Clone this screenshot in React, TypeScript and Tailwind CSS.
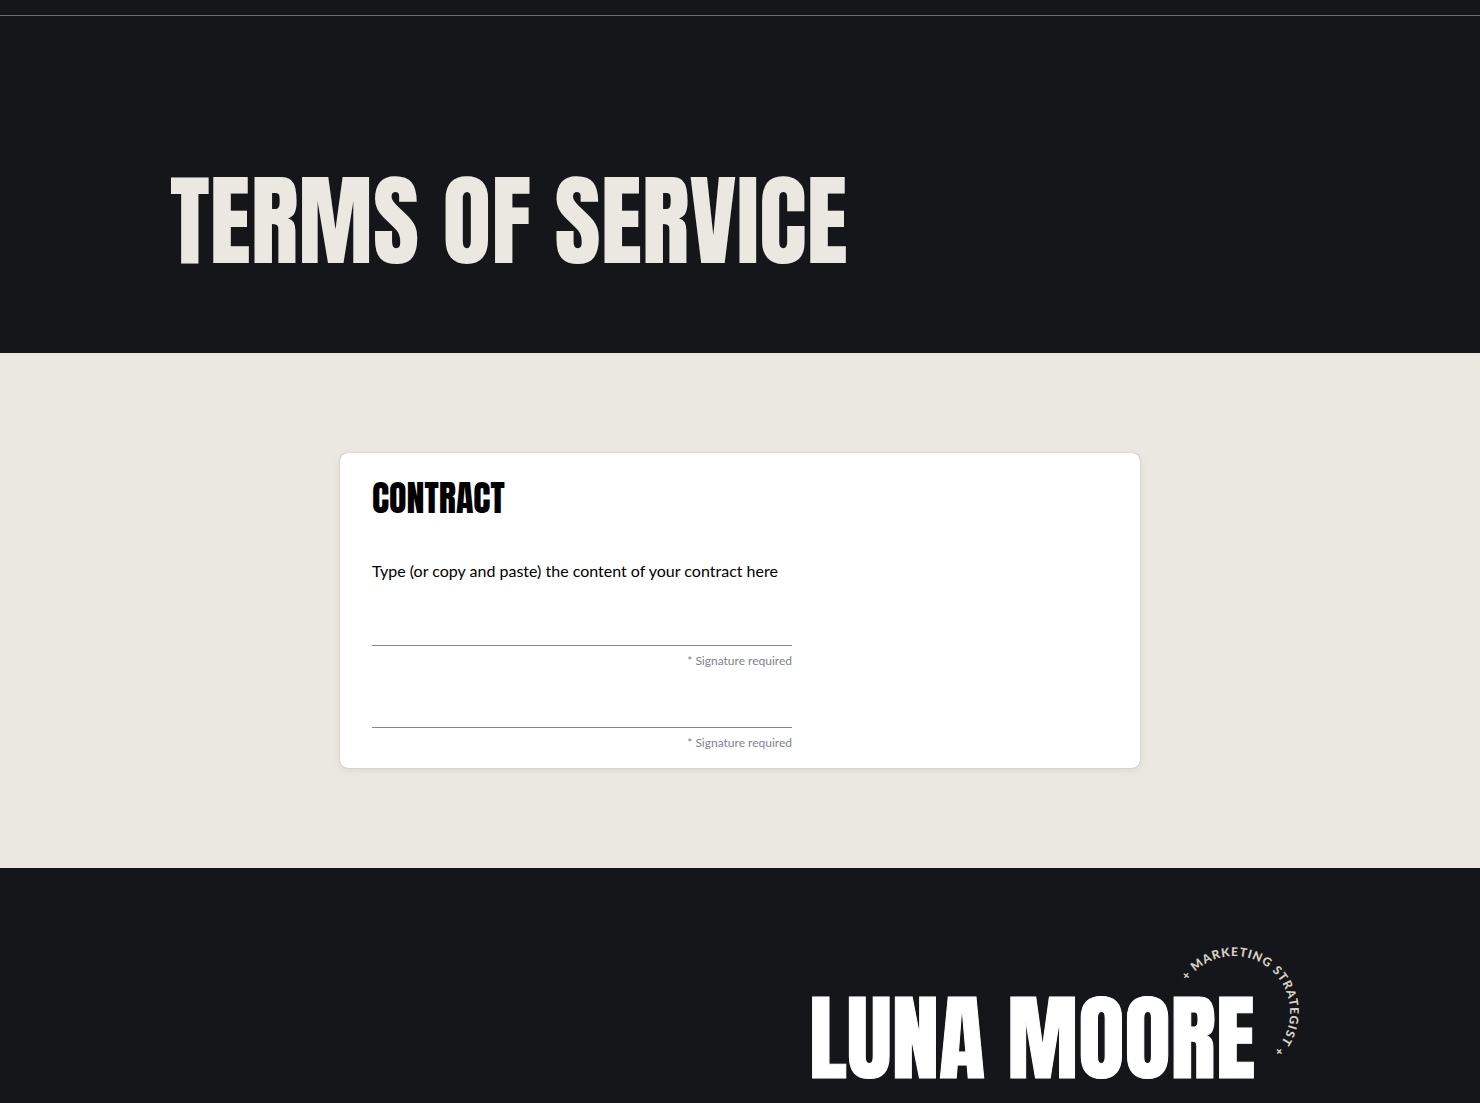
import { useId } from 'react';

const display = "font-['Anton','Liberation_Sans_Narrow',sans-serif]";

function SignatureField({ label }: { label: string }) {
  const id = useId();

  return (
    <div className="flex max-w-[420px] flex-col">
      <input
        id={id}
        type="text"
        required
        className="h-[54px] w-full border-b border-[#87888b] bg-transparent px-2 text-base outline-none"
      />
      <label htmlFor={id} className="mt-[7px] h-[21px] text-right text-xs leading-4 text-[#7f8290]">
        {label}
      </label>
    </div>
  );
}

function RoundBadge() {
  return (
    <svg viewBox="0 0 140 140" className="absolute -top-[38px] -right-[49px] size-[140px]" aria-label="Marketing strategist">
      <path id="badge-ring" d="M 14 70 A 56 56 0 0 1 126 70 A 56 56 0 0 1 14 70" fill="none" />
      <text className="fill-[#d6d0c6] font-['Lato',sans-serif] text-xs font-black tracking-[1px]">
        <textPath href="#badge-ring" startOffset="33">+ MARKETING STRATEGIST +</textPath>
      </text>
    </svg>
  );
}

export default function App() {
  return (
    <div className="min-h-screen bg-[#15161a] font-['Proxima_Nova','Lato',sans-serif]">
      {/* Page title */}
      <header className="border-b border-[#15161a]">
        <div className="h-4 border-b border-[#6d6e70]"></div>
        <div className="mx-auto max-w-[1140px] pt-36 pb-[70px]">
          <h1 className={`${display} text-[100px] leading-[122px] text-[#ebe8e1]`}>TERMS OF SERVICE</h1>
        </div>
      </header>

      {/* Contract */}
      <main className="bg-[#ebe8e1] px-6 py-[100px]">
        <section className="mx-auto max-w-[800px] rounded-lg bg-white px-8 pt-6 pb-3 shadow-[0_0_1px_rgba(0,0,0,0.4),0_2px_8px_rgba(0,0,0,0.08)]">
          <h2 className={`${display} text-4xl leading-[42px] text-black`}>CONTRACT</h2>
          <p className="mt-10 text-base leading-6 text-black">
            Type (or copy and paste) the content of your contract here
          </p>
          <div className="mt-[9px] flex flex-col">
            <SignatureField label="* Signature required" />
            <SignatureField label="* Signature required" />
          </div>
        </section>
      </main>

      {/* Logo */}
      <footer className="mx-auto flex max-w-[1140px] justify-end pt-28 pr-[55px]">
        <a href="/" className="relative block text-white">
          <span className={`${display} block text-[95px] leading-[115px] [-webkit-text-stroke:1px_white]`}>LUNA MOORE</span>
          <RoundBadge />
        </a>
      </footer>
    </div>
  );
}
